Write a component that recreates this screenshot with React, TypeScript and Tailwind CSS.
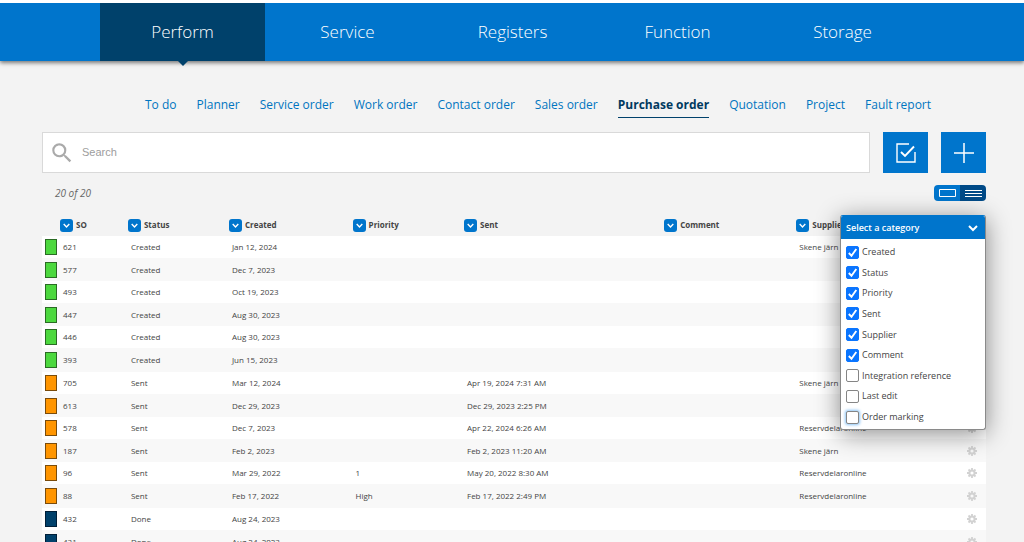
import { MdSearch } from "react-icons/md";
import clsx from "clsx";

const sections = ["Perform", "Service", "Registers", "Function", "Storage"];

const pages = [
  "To do",
  "Planner",
  "Service order",
  "Work order",
  "Contact order",
  "Sales order",
  "Purchase order",
  "Quotation",
  "Project",
  "Fault report",
];

const columns = [
  { name: "SO", width: "w-[7.2%]" },
  { name: "Status", width: "w-[10.7%]" },
  { name: "Created", width: "w-[13.1%]" },
  { name: "Priority", width: "w-[11.8%]" },
  { name: "Sent", width: "w-[21.2%]" },
  { name: "Comment", width: "w-[14%]" },
  { name: "Supplier", width: "" },
];

type Order = {
  so: string;
  status: string;
  created: string;
  priority?: string;
  sent?: string;
  supplier?: string;
};

const orders: Order[] = [
  { so: "621", status: "Created", created: "Jan 12, 2024", supplier: "Skene järn" },
  { so: "577", status: "Created", created: "Dec 7, 2023" },
  { so: "493", status: "Created", created: "Oct 19, 2023" },
  { so: "447", status: "Created", created: "Aug 30, 2023" },
  { so: "446", status: "Created", created: "Aug 30, 2023" },
  { so: "393", status: "Created", created: "Jun 15, 2023" },
  { so: "705", status: "Sent", created: "Mar 12, 2024", sent: "Apr 19, 2024 7:31 AM", supplier: "Skene järn" },
  { so: "613", status: "Sent", created: "Dec 29, 2023", sent: "Dec 29, 2023 2:25 PM" },
  { so: "578", status: "Sent", created: "Dec 7, 2023", sent: "Apr 22, 2024 6:26 AM", supplier: "Reservdelaronline" },
  { so: "187", status: "Sent", created: "Feb 2, 2023", sent: "Feb 2, 2023 11:20 AM", supplier: "Skene järn" },
  { so: "96", status: "Sent", created: "Mar 29, 2022", priority: "1", sent: "May 20, 2022 8:30 AM", supplier: "Reservdelaronline" },
  { so: "88", status: "Sent", created: "Feb 17, 2022", priority: "High", sent: "Feb 17, 2022 2:49 PM", supplier: "Reservdelaronline" },
  { so: "432", status: "Done", created: "Aug 24, 2023" },
  { so: "431", status: "Done", created: "Aug 24, 2023" },
];

const swatches: Record<string, string> = {
  Created: "bg-[#4cd83e] border-[#2a6b24]",
  Sent: "bg-[#ff9500] border-[#7a4c0c]",
  Done: "bg-[#00416b] border-[#001f38]",
};

const categories = [
  { name: "Created", checked: true },
  { name: "Status", checked: true },
  { name: "Priority", checked: true },
  { name: "Sent", checked: true },
  { name: "Supplier", checked: true },
  { name: "Comment", checked: true },
  { name: "Integration reference", checked: false },
  { name: "Last edit", checked: false },
  { name: "Order marking", checked: false },
];

const Chevron = ({ className }: { className: string }) => (
  <svg viewBox="0 0 10 10" className={className} fill="none" stroke="currentColor" strokeWidth="2">
    <path d="M1 3l4 4 4-4" />
  </svg>
);

const Gear = () => (
  <svg viewBox="0 0 20 20" className="h-[10px] w-[10px]" fill="none" stroke="currentColor">
    <circle cx="10" cy="10" r="5.2" strokeWidth="4" />
    <path
      strokeWidth="3.6"
      d="M10 0v4M10 16v4M0 10h4M16 10h4M3 3l3 3M14 14l3 3M17 3l-3 3M6 14l-3 3"
    />
  </svg>
);

const Header = () => (
  <header className="relative border-t-[3px] border-white bg-[#0075cc] shadow-[0_2px_4px_rgba(0,0,0,0.5)]">
    <nav className="mx-[99px] grid grid-cols-5 pl-px">
      {sections.map((section, i) => (
        <a
          key={section}
          href="#"
          className={clsx(
            "relative flex h-[58px] items-center justify-center text-[17px] font-light text-white",
            i === 0 && "bg-[#00416b]"
          )}
        >
          {section}
          {i === 0 && (
            <svg
              viewBox="0 0 10 5"
              className="absolute top-full left-1/2 h-[5px] w-[10px] -translate-x-1/2 fill-[#00416b]"
            >
              <path d="M0 0h10L5 5z" />
            </svg>
          )}
        </a>
      ))}
    </nav>
  </header>
);

const PageNav = () => (
  <nav className="flex justify-center gap-5 pl-12 text-xs whitespace-nowrap text-[#0075c0]">
    {pages.map((page) => (
      <a
        key={page}
        href="#"
        className={clsx(
          "h-[26px] border-b leading-[26px]",
          page === "Purchase order" ? "border-[#00416b] font-bold text-[#00395f]" : "border-transparent"
        )}
      >
        {page}
      </a>
    ))}
  </nav>
);

const SearchBar = () => (
  <div className="mt-[14px] flex h-[41px] gap-[13px]">
    <label className="flex flex-1 items-center border border-[#d9d9d9] bg-white pl-[6px]">
      <MdSearch className="h-[26px] w-[26px] text-[#aaa]" />
      <input
        type="text"
        aria-label="Search"
        placeholder="Search"
        className="ml-[7px] flex-1 font-['Liberation_Sans',sans-serif] text-[11px] outline-none placeholder:text-[#9d9d9d]"
      />
    </label>
    <button aria-label="Select orders" className="flex w-[45px] items-center justify-center bg-[#0075cc] text-white">
      <svg viewBox="0 0 20 20" className="h-5 w-5" fill="none" stroke="currentColor">
        <path d="M13 1H1v18h18V9" strokeWidth="1.4" />
        <path d="M5 9l4 4 9-9.500" strokeWidth="1.900" />
      </svg>
    </button>
    <button aria-label="New order" className="flex w-[45px] items-center justify-center bg-[#0075cc] text-white">
      <svg viewBox="0 0 20 20" className="h-5 w-5" stroke="currentColor" strokeWidth="1.5">
        <path d="M10 0v20M0 10h20" />
      </svg>
    </button>
  </div>
);

const ViewToggle = () => (
  <div className="flex h-4 w-[52px] overflow-hidden rounded text-white">
    <button aria-label="Card view" className="flex flex-1 items-center justify-center bg-[#0075cc]">
      <svg viewBox="0 0 17 8" className="h-2 w-[17px]" fill="none" stroke="currentColor" strokeWidth="1">
        <path d="M.5.5h16v7H.5z" />
      </svg>
    </button>
    <button aria-label="List view" className="flex flex-1 items-center justify-center bg-[#004a87]">
      <svg viewBox="0 0 17 8" className="h-2 w-[17px]" stroke="currentColor" strokeWidth="1">
        <path d="M0 1.500h17M0 4.500h17M0 7.500h17" />
      </svg>
    </button>
  </div>
);

const CategoryMenu = () => (
  <div className="absolute top-[30px] right-0 w-[146px] overflow-hidden rounded-[3px] border border-[#8a8a8a] border-t-[#0075cc] bg-white shadow-[0_4px_24px_rgba(0,0,0,0.45)]">
    <button className="flex h-[23px] w-full items-center justify-between bg-[#0075cc] pr-[7px] pl-[5px] text-[9px] font-semibold text-white">
      Select a category
      <Chevron className="h-[10px] w-[10px]" />
    </button>
    <div className="flex h-[190px] flex-col justify-between px-[5px] pt-[6px] pb-[5px]">
      {categories.map((category, i) => (
        <label key={category.name} className="flex items-center gap-[3px] text-[9px] leading-[14px] text-[#444]">
          <span className="grid">
            <input
              type="checkbox"
              defaultChecked={category.checked}
              className={clsx(
                "peer col-start-1 row-start-1 h-[13px] w-[13px] appearance-none rounded-[2px] border border-[#858585] bg-white checked:border-[#0a75ff] checked:bg-[#0a75ff]",
                i === categories.length - 1 && "shadow-[0_0_3px_1px_#8cc4f5]"
              )}
            />
            <svg
              viewBox="0 0 13 13"
              className="pointer-events-none invisible col-start-1 row-start-1 h-[13px] w-[13px] peer-checked:visible"
              fill="none"
              stroke="white"
              strokeWidth="1.900"
            >
              <path d="M2.800 7l2.700 2.700L10.300 3" />
            </svg>
          </span>
          {category.name}
        </label>
      ))}
    </div>
  </div>
);

const OrderTable = () => (
  <table className="mt-[13px] w-full table-fixed text-left text-[8px] text-[#444]">
    <thead>
      <tr className="h-[22px]">
        <th className="w-[18px]" />
        {columns.map((column) => (
          <th key={column.name} className={clsx("p-0 font-bold", column.width)}>
            <div className="flex items-center gap-[3px]">
              <button
                aria-label={`Sort by ${column.name}`}
                className="flex h-[13px] w-[13px] items-center justify-center rounded-[3px] bg-[#0075cc] text-white"
              >
                <Chevron className="h-[7px] w-[7px]" />
              </button>
              {column.name}
            </div>
          </th>
        ))}
        <th className="w-[19px]" />
      </tr>
    </thead>
    <tbody className="leading-3">
      {orders.map((order) => (
        <tr key={order.so} className="h-[22px] bg-white even:h-[23px] even:bg-[#f8f8f8] nth-[6n]:h-6">
          <td className="pl-[3px]">
            <div className={clsx("h-4 w-3 border", swatches[order.status])} />
          </td>
          <td className="pl-[3px]">{order.so}</td>
          <td className="pl-[3px]">{order.status}</td>
          <td className="pl-[3px]">{order.created}</td>
          <td className="pl-[3px]">{order.priority}</td>
          <td className="pl-[3px]">{order.sent}</td>
          <td />
          <td className="pl-[3px]">{order.supplier}</td>
          <td>
            <button aria-label={`Settings for ${order.so}`} className="block text-[#d2d2d2]">
              <Gear />
            </button>
          </td>
        </tr>
      ))}
    </tbody>
  </table>
);

const App = () => {
  return (
    <div className="h-screen overflow-hidden bg-[#f3f3f3] font-['Open_Sans',sans-serif]">
      <Header />
      <main className="pt-[31px] pr-[38px] pl-[42px]">
        <PageNav />
        <SearchBar />
        <div className="relative mt-3 flex h-4 items-center justify-between pl-[13px]">
          <p className="text-[10px] text-[#666] italic">20 of 20</p>
          <ViewToggle />
          <CategoryMenu />
        </div>
        <OrderTable />
      </main>
    </div>
  );
};

export default App;
